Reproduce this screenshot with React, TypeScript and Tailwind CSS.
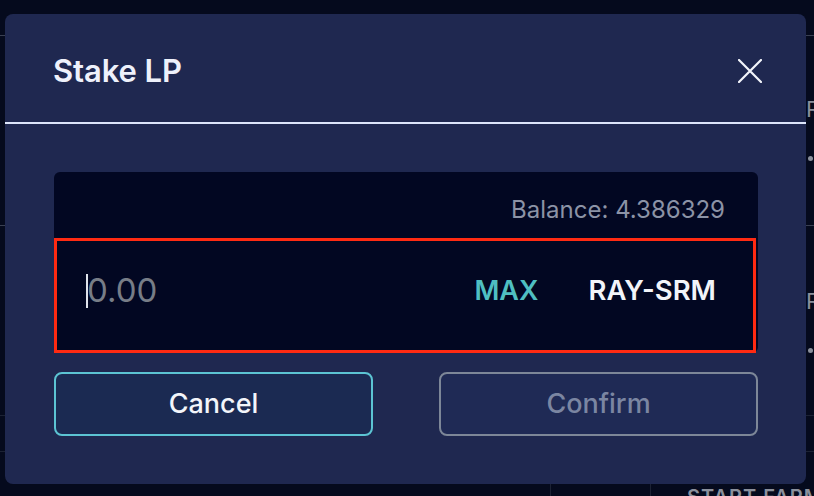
import React from 'react';

const font = { fontFamily: 'Inter, "Noto Sans", sans-serif' };

function PageBehind() {
  return (
    <div className="flex flex-col w-full h-full">
      <div className="h-[36px] shrink-0 border-b border-[#3a4052]" />
      <div className="h-[190px] shrink-0 border-b border-[#3a4052] flex">
        <div className="w-[806px] shrink-0" />
        <div className="flex flex-col pt-[62px] text-[22px] leading-none text-[#8b909c]">
          <span>R</span>
          <span className="mt-[36px] ml-[2px] w-[5px] h-[5px] rounded-full bg-[#8b909c]" />
        </div>
      </div>
      <div className="h-[190px] shrink-0 border-b border-[#1c2234] flex">
        <div className="w-[806px] shrink-0" />
        <div className="flex flex-col pt-[64px] text-[22px] leading-none text-[#8b909c]">
          <span>R</span>
          <span className="mt-[36px] ml-[2px] w-[5px] h-[5px] rounded-full bg-[#8b909c]" />
        </div>
      </div>
      <div className="h-[36px] shrink-0 border-b border-[#1c2234]" />
      <div className="flex-1 flex">
        <div className="w-[550px] shrink-0" />
        <div className="w-[100px] shrink-0 border-l border-[#1c2234]" />
        <div className="border-l border-[#1c2234] pl-[36px] pt-[30px] text-[20px] font-semibold tracking-wider text-[#8b909c] whitespace-nowrap">
          START FARMING
        </div>
      </div>
    </div>
  );
}

function CloseIcon() {
  return (
    <svg width="24" height="24" viewBox="0 0 24 24" fill="none" stroke="#f3f5fb" strokeWidth="2.2" strokeLinecap="round">
      <path d="M1 1 L23 23 M23 1 L1 23" />
    </svg>
  );
}

export default function App() {
  return (
    <div className="relative w-[814px] h-[496px] overflow-hidden bg-[#050a1d]" style={font}>
      <PageBehind />

      {/* Stake LP modal */}
      <div className="absolute left-[5px] top-[14px] w-[801px] h-[470px] rounded-[8px] bg-[#1f2850] flex flex-col">
        <div className="h-[108px] shrink-0 flex items-center justify-between pl-[48px] pr-[44px] pt-[5px]">
          <h2 className="text-[31px] font-semibold text-[#eef1fb] leading-none tracking-[-0.1px]">Stake LP</h2>
          <button className="flex items-center justify-center">
            <CloseIcon />
          </button>
        </div>
        <div className="h-[2px] bg-[#dde5fb]" />

        <div className="flex flex-col pt-[48px] pl-[49px] pr-[48px]">
          <div className="rounded-[6px] bg-[#020722] flex flex-col">
            <div className="h-[66px] flex items-center justify-end pr-[33px] pt-[10px]">
              <span className="text-[24px] text-[#8c93a6]">Balance: 4.386329</span>
            </div>
            <div className="h-[115px] mr-[2px] border-[3px] border-[#ff2a12] flex items-center pl-[29px] pr-[37px] pb-[10px]">
              <div className="flex items-center flex-1">
                <span className="w-[2px] h-[34px] bg-[#dfe3ec]" />
                <span className="text-[33px] text-[#777d87] leading-none -ml-[1px]">0.00</span>
              </div>
              <span className="text-[27px] font-semibold text-[#4fbfc2] leading-none">MAX</span>
              <span className="ml-[50px] text-[27.5px] font-semibold text-[#f2f4f9] leading-none">RAY-SRM</span>
            </div>
          </div>

          <div className="mt-[19px] flex justify-between">
            <button className="w-[319px] h-[64px] rounded-[8px] border-2 border-[#5cc4d3] bg-[#1b2a52] text-[27px] font-medium text-[#f3f5fa]">
              Cancel
            </button>
            <button className="w-[319px] h-[64px] rounded-[8px] border-2 border-[#7d8798] bg-[#1f2a55] text-[27px] font-medium text-[#7b86a2]">
              Confirm
            </button>
          </div>
        </div>
      </div>
    </div>
  );
}
